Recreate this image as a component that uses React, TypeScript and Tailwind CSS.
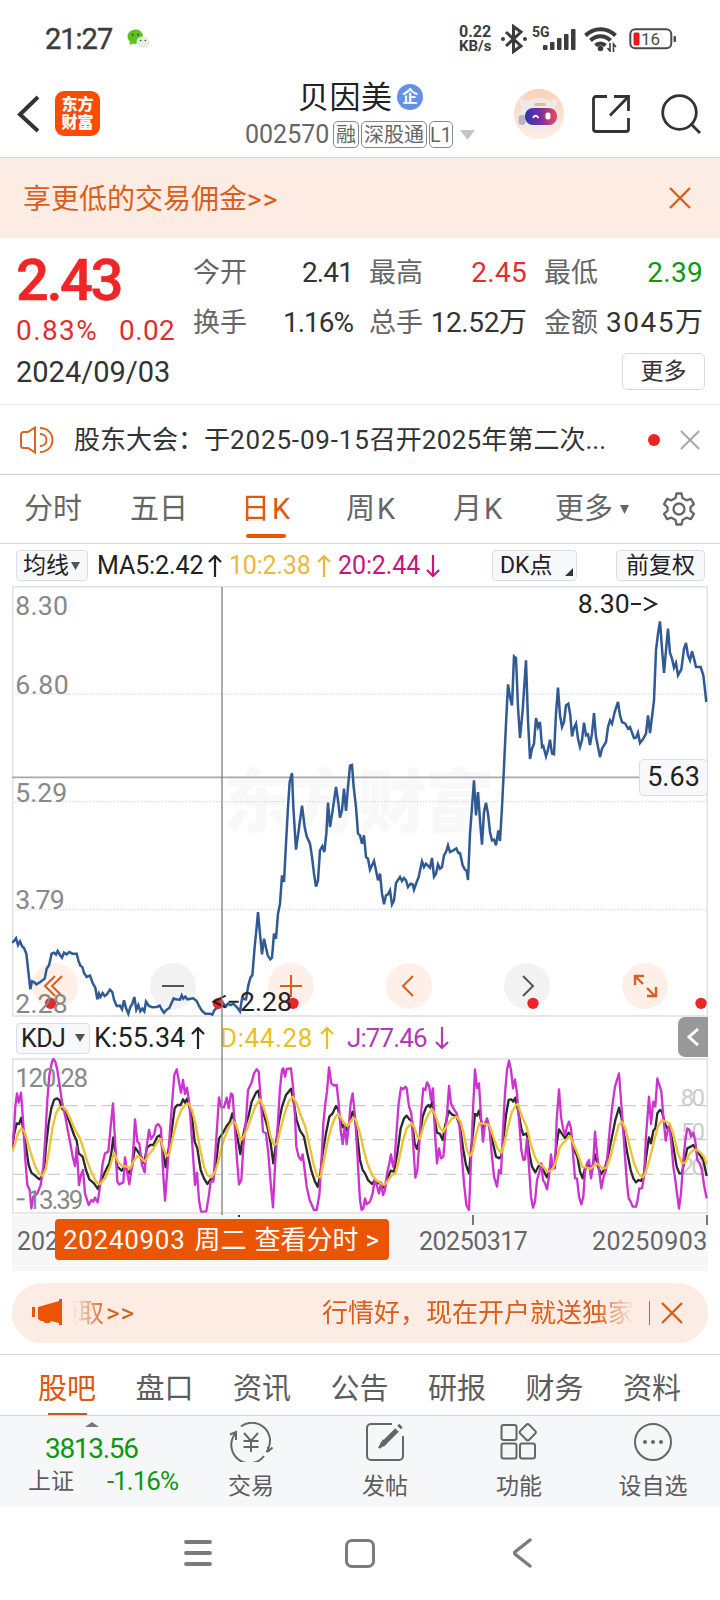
import type { ReactNode } from "react";
import { clsx } from "clsx";

const PRICE_LINE =
  "36,1087 42,1082 48,1074 54,1094 60,1083 66,1098 72,1103 79,1120 84,1165 91,1227 96,1203 103,1206 109,1212 121,1205 134,1195 140,1165 147,1155 155,1120 162,1117 168,1123 173,1112 180,1124 186,1132 192,1117 200,1122 208,1115 217,1120 230,1120 235,1140 241,1156 247,1160 252,1178 260,1190 270,1186 278,1208 286,1222 292,1257 297,1240 301,1250 308,1238 314,1247 320,1243 330,1228 337,1235 342,1258 350,1277 360,1276 366,1287 372,1260 378,1283 385,1300 391,1280 397,1270 403,1250 409,1288 415,1274 421,1293 427,1285 433,1293 438,1264 446,1276 456,1281 470,1280 479,1276 485,1287 492,1297 500,1288 508,1283 516,1265 521,1254 527,1257 540,1258 545,1245 550,1255 556,1249 562,1257 580,1254 590,1262 597,1277 605,1290 616,1300 630,1300 637,1303 643,1290 655,1278 665,1268 672,1272 678,1278 684,1270 692,1274 700,1270 710,1280 720,1293 726,1255 738,1257 745,1215 752,1190 757,1185 764,1100 770,1040 774,995 779,1050 786,1122 792,1075 797,1098 803,1125 811,1137 816,1132 822,1060 828,1075 834,1000 840,970 846,885 852,905 858,790 864,680 869,605 876,578 880,680 888,808 896,750 906,676 914,740 920,768 930,790 936,830 942,880 948,919 954,900 960,810 967,798 973,815 979,760 984,667 990,740 998,690 1008,620 1014,660 1020,712 1026,690 1032,625 1038,692 1044,620 1050,556 1056,554 1061,620 1068,680 1074,760 1080,765 " +
  "1086,790 1092,765 1098,830 1104,835 1110,868 1122,842 1128,870 1134,900 1140,880 1146,940 1152,972 1158,945 1164,942 1170,930 1176,972 1182,960 1188,908 1200,890 1206,902 1212,893 1218,900 1224,920 1232,910 1238,912 1242,928 1250,905 1256,890 1266,843 1272,860 1278,850 1286,858 1290,862 1296,833 1302,889 1308,880 1314,852 1320,865 1326,860 1332,825 1338,815 1344,795 1350,815 1360,810 1369,804 1375,818 1380,818 1388,855 1395,868 1400,872 1404,899 1410,760 1416,680 1422,600 1428,705 1434,635 1440,720 1446,793 1452,695 1458,667 1464,700 1470,755 1476,780 1482,778 1488,795 1495,750 1500,782 1506,680 1512,560 1518,430 1524,312 1530,350 1536,375 1542,228 1548,233 1554,380 1560,473 1568,390 1578,240 1584,420 1590,536 1596,505 1602,490 1608,413 1614,440 1620,425 1626,500 1630,497 1638,528 1644,508 1650,478 1656,520 1662,522 1668,400 1674,322 1680,405 1686,440 1692,425 1698,375 1705,370 1711,405 1716,468 1722,443 1728,430 1734,475 1740,500 1746,480 1752,427 1758,465 1764,462 1770,494 1776,460 1782,398 1788,470 1794,500 1800,530 1806,505 1818,485 1824,440 1830,420 1836,430 1844,395 1854,365 1860,405 1866,425 1876,430 1884,445 1890,440 1902,473 1908,472 1914,457 1920,488 1930,475 1938,460 1944,405 1950,458 1956,410 1962,360 1968,210 1974,160 1980,123 1986,205 1992,278 1998,210 2004,145 2010,218 2016,235 2022,262 2028,248 2034,285 2044,267 2052,205 2058,188 2064,225 2070,240 2076,213 2082,235 2088,260 2102,260 2110,285 2114,320 2119,365";

const J_LINE =
  "36,380 42,330 46,260 51,220 56,248 63,218 69,300 76,420 82,495 89,510 94,565 100,530 112,520 122,495 130,440 136,350 142,240 148,165 156,125 160,117 166,125 172,150 178,190 186,245 196,290 203,330 211,370 218,410 225,438 230,380 237,495 243,465 249,450 255,520 266,555 274,540 280,545 285,533 293,547 300,500 308,430 315,400 325,395 332,320 339,250 345,360 352,485 357,493 370,487 375,412 382,460 388,493 396,440 401,370 405,298 412,365 418,370 426,435 434,457 440,380 447,330 453,357 462,345 468,318 475,312 483,325 489,450 495,542 502,450 510,330 517,240 523,165 530,148 536,180 543,218 549,180 555,222 561,203 568,250 574,330 580,420 585,495 591,458 597,540 603,575 619,574 626,530 632,485 640,485 648,370 657,232 664,262 672,262 680,233 686,265 693,220 698,225 705,330 711,420 717,493 724,480 730,380 738,300 744,210 754,190 762,160 770,148 776,155 783,250 789,335 798,340 805,400 813,500 819,562 825,440 833,320 840,205 846,150 850,145 855,170 860,147 873,145 879,200 885,290 889,380 896,410 903,420 908,403 914,450 920,500 929,540 942,570 950,570 958,525 964,430 970,310 976,250 981,215 987,142 994,190 1002,197 1010,195 1016,250 1022,330 1028,372 1034,320 1040,372 1046,320 1052,250 1058,220 1066,300 1072,400 1078,510 " +
  "1080,540 1085,570 1090,565 1095,535 1100,553 1110,545 1118,520 1124,480 1130,495 1137,520 1143,490 1149,525 1155,510 1161,460 1167,435 1173,403 1179,440 1183,430 1190,330 1196,250 1203,203 1210,208 1216,200 1220,205 1227,260 1234,280 1240,380 1246,473 1252,450 1258,370 1264,270 1270,205 1276,210 1281,187 1288,200 1293,240 1299,205 1305,340 1311,430 1317,385 1323,415 1330,410 1336,340 1342,270 1347,198 1353,250 1360,265 1370,280 1378,315 1385,400 1392,490 1399,555 1407,570 1413,420 1419,270 1425,148 1431,205 1437,190 1443,290 1449,365 1455,310 1461,295 1468,320 1475,400 1482,470 1491,500 1497,450 1503,460 1508,350 1515,220 1521,150 1527,122 1533,150 1539,205 1545,178 1551,220 1557,300 1564,390 1570,420 1575,418 1581,355 1587,440 1593,530 1599,563 1605,545 1611,480 1620,450 1624,430 1629,480 1635,490 1641,508 1647,470 1653,403 1659,445 1665,445 1670,300 1677,208 1683,290 1689,325 1695,345 1701,320 1707,305 1713,325 1719,400 1725,475 1731,475 1737,530 1744,553 1750,530 1755,455 1761,430 1767,420 1773,475 1779,440 1785,335 1791,400 1797,450 1804,505 1811,470 1818,450 1824,390 1830,320 1838,250 1845,200 1857,160 1863,240 1869,320 1875,410 1881,490 1886,535 1892,545 1898,560 1908,560 1912,545 1918,505 1926,505 1932,470 1938,350 1947,230 1953,312 1960,245 1966,260 1972,175 1978,195 1984,215 1990,290 1997,362 2002,335 2008,318 2014,370 2020,440 2026,480 2031,520 2037,566 2043,520 2050,420 2056,360 2062,325 2068,330 2073,350 2080,338 2086,365 2092,420 2099,430 2106,450 2112,495 2120,535";

const K_LINE =
  "36,388 42,345 50,310 57,312 64,293 70,330 78,380 86,435 94,458 105,467 118,478 126,470 133,440 138,380 146,310 154,265 162,240 170,235 178,240 186,265 196,275 210,310 222,345 230,362 236,400 248,410 258,450 268,478 282,490 294,507 302,485 315,455 328,430 334,400 340,352 346,400 352,440 365,452 374,440 388,460 396,440 405,382 414,395 424,410 433,430 440,385 450,375 460,375 472,350 481,345 488,390 497,442 503,400 510,370 518,310 524,265 532,255 542,255 549,238 555,248 561,236 568,260 576,290 584,365 592,385 602,450 612,475 622,492 632,478 640,475 648,430 657,355 668,340 680,318 690,305 697,280 704,308 712,350 721,402 727,360 735,320 745,290 755,245 768,218 775,212 782,250 792,285 802,320 812,370 820,430 828,370 836,310 846,260 858,225 873,206 880,240 890,300 900,332 912,350 922,400 935,455 945,485 953,500 960,470 968,400 978,340 988,290 998,280 1008,258 1015,270 1022,305 1028,322 1034,312 1041,332 1050,300 1058,275 1066,300 1072,350 1080,420 " +
  "1088,450 1095,460 1104,480 1116,492 1125,480 1134,490 1142,487 1152,503 1160,480 1172,452 1182,455 1192,400 1202,325 1212,295 1220,287 1228,298 1236,303 1244,370 1251,387 1260,350 1268,290 1278,262 1286,255 1291,262 1297,245 1303,290 1311,338 1320,342 1328,360 1336,315 1346,272 1355,283 1370,290 1380,320 1390,390 1398,435 1407,460 1413,390 1420,330 1425,282 1431,287 1437,272 1443,300 1449,325 1458,305 1468,320 1478,365 1488,410 1498,415 1504,408 1510,360 1518,285 1526,240 1534,238 1540,245 1546,233 1554,270 1564,325 1570,345 1580,340 1588,400 1596,440 1606,457 1616,438 1625,437 1632,455 1641,472 1648,450 1655,435 1663,442 1670,370 1677,328 1685,340 1695,354 1706,338 1714,350 1723,390 1732,410 1740,455 1748,475 1755,445 1767,435 1775,450 1785,403 1794,440 1804,463 1816,440 1826,400 1836,350 1846,300 1857,263 1864,290 1872,340 1882,400 1892,450 1900,475 1908,487 1916,480 1924,483 1932,460 1940,400 1947,352 1953,370 1960,332 1966,325 1972,280 1980,270 1986,275 1994,310 2002,325 2010,325 2020,380 2030,440 2038,460 2046,460 2052,430 2062,385 2072,380 2080,375 2088,390 2100,405 2110,420 2120,468";

const D_LINE =
  "36,395 44,375 54,340 64,325 74,335 84,370 94,405 106,440 118,462 128,467 138,445 148,385 158,320 168,280 178,262 188,260 200,272 216,308 228,335 240,355 250,385 262,425 276,460 290,488 300,492 315,475 330,440 342,398 354,425 366,438 380,440 390,445 400,425 412,408 424,415 434,425 446,405 458,390 470,370 482,357 490,385 500,408 508,402 520,345 532,300 544,270 556,255 566,250 576,270 586,310 600,385 612,440 622,465 634,472 646,455 656,420 668,370 680,335 692,312 700,305 708,312 716,340 722,362 732,348 744,320 756,285 768,255 780,238 790,260 802,300 812,350 822,375 832,370 842,325 854,280 866,245 878,230 890,250 902,285 916,320 928,375 940,430 952,470 962,472 970,430 982,370 994,320 1006,292 1014,282 1024,295 1034,312 1042,318 1052,305 1060,293 1068,300 1080,340 " +
  "1090,385 1102,430 1116,465 1128,480 1140,488 1152,495 1164,482 1176,465 1186,460 1196,425 1208,365 1220,325 1234,310 1242,320 1252,350 1260,357 1270,320 1284,285 1296,268 1304,280 1318,320 1330,335 1342,315 1356,295 1370,290 1382,305 1392,345 1402,395 1410,408 1418,395 1428,345 1438,310 1446,310 1456,312 1468,315 1480,350 1492,385 1504,398 1512,375 1524,320 1536,275 1548,255 1554,252 1566,290 1580,320 1592,370 1604,410 1616,430 1630,440 1642,455 1656,450 1668,425 1680,380 1696,362 1710,348 1722,375 1736,410 1748,442 1760,442 1770,447 1780,440 1788,430 1798,435 1808,447 1820,442 1832,410 1844,360 1856,315 1866,305 1876,325 1888,375 1902,430 1916,462 1928,472 1936,460 1948,420 1962,365 1974,318 1986,300 1998,305 2010,312 2022,350 2034,400 2046,430 2056,428 2066,405 2080,390 2092,390 2102,398 2112,410 2120,435";

const PERIODS = [
  { label: "分时", left: "ml-[24px]", width: "w-[58px]" },
  { label: "五日", left: "ml-[48px]", width: "w-[58px]" },
  { label: "日K", left: "ml-[53px]", width: "w-[52px]", active: true },
  { label: "周K", left: "ml-[53px]", width: "w-[52px]" },
  { label: "月K", left: "ml-[55px]", width: "w-[54px]" },
];

const SECTIONS = ["股吧", "盘口", "资讯", "公告", "研报", "财务", "资料"];

function StatusBar() {
  return (
    <div className="flex h-[78px] items-center pl-[45px] text-[#3c3c3c]">
      <span className="w-[82px] whitespace-nowrap text-[29px] leading-none tracking-[-1px] [-webkit-text-stroke:0.4px_#3c3c3c]">21:27</span>
      <svg className="h-[20px] w-[23px]" viewBox="0 0 23 20">
        <path d="M3 12.5 2.5 16l3.500-1.500a10 10 0 0 0 4 .3L16 8C16 3 12.500.5 8.500.5S.5 3.500.5 7.500c0 2 1 3.800 2.500 5Z" fill="#5cc21d" />
        <path d="M16 7.500c3.700 0 6.500 2.300 6.500 5.500 0 1.700-.8 3.200-2.200 4.200l.4 2.300-2.500-1.200c-5 1.300-8.700-1.600-8.700-5.300 0-3.200 2.800-5.500 6.500-5.500Z" fill="#e3efe0" />
        <g fill="#33502a">
          <circle cx="5.800" cy="5.800" r="1" />
          <circle cx="11" cy="5.800" r="1" />
          <circle cx="13.700" cy="11.500" r=".8" />
          <circle cx="18.300" cy="11.500" r=".8" />
        </g>
      </svg>
      <div className="ml-[309px] flex w-[38px] flex-col whitespace-nowrap font-bold leading-[14px]">
        <span className="text-[16px]">0.22</span>
        <span className="text-[15px]">KB/s</span>
      </div>
      <svg className="ml-[4px] h-[30px] w-[26px]" viewBox="0 0 26 30" fill="none" stroke="currentColor" strokeWidth="3">
        <path d="m5 8 15 14-7.500 5.500v-25L20 8 5 22" />
        <circle cx="2" cy="15" r="2" fill="currentColor" stroke="none" />
        <circle cx="24" cy="15" r="2" fill="currentColor" stroke="none" />
      </svg>
      <div className="relative ml-[5px] h-[28px] w-[44px]">
        <span className="absolute left-0 top-0 text-[14px] font-bold leading-[14px]">5G</span>
        <svg className="h-full w-full" viewBox="0 0 44 28" fill="currentColor">
          <rect x="11" y="20" width="4.500" height="5" rx="1" />
          <rect x="18" y="17" width="4.500" height="8" rx="1" />
          <rect x="25" y="13" width="4.500" height="12" rx="1" />
          <rect x="32" y="9" width="4.500" height="16" rx="1" />
          <rect x="39" y="4" width="4.500" height="21" rx="1" />
        </svg>
      </div>
      <svg className="ml-[8px] h-[26px] w-[34px]" viewBox="0 0 34 26" fill="none" stroke="currentColor" strokeWidth="4">
        <path d="M1.500 9.500a21 21 0 0 1 30 0M6.500 14.500a14 14 0 0 1 20 0M11.500 19.500a7 7 0 0 1 10 0" />
        <circle cx="16.500" cy="22.500" r="2.800" fill="currentColor" stroke="none" />
        <path d="M26 17v8l-2.500-3M29.500 26v-8l2.500 3" strokeWidth="1.600" />
      </svg>
      <svg className="ml-[11px] h-[22px] w-[48px]" viewBox="0 0 48 22">
        <rect x="1.300" y="1.300" width="41" height="19" rx="5" fill="none" stroke="#4a4a4a" strokeWidth="2" />
        <rect x="4.500" y="4.500" width="6" height="13" rx="1.500" fill="#e8191c" />
        <rect x="44.500" y="8" width="2.500" height="6" rx="1" fill="#4a4a4a" />
        <text x="12" y="17" fontSize="17" fill="#4a4a4a">16</text>
      </svg>
    </div>
  );
}

function Tag({ children, className }: { children: ReactNode; className: string }) {
  return (
    <span className={clsx("flex h-[27px] items-center justify-center whitespace-nowrap rounded-[5px] border border-[#888] text-[20px] leading-none", className)}>
      {children}
    </span>
  );
}

function Header() {
  return (
    <div className="flex h-[80px] items-center border-b border-[#d2d4d6] pb-[8px] pl-[17px]">
      <svg className="h-[38px] w-[24px]" viewBox="0 0 24 38" fill="none" stroke="#333" strokeWidth="4">
        <path d="M21 2 3 19.500 21 36" />
      </svg>
      <div className="ml-[14px] flex h-[45px] w-[45px] flex-col items-center justify-center rounded-[9px] bg-[#fd4a04] text-[16px] font-black leading-[18px] text-white">
        <span>东方</span>
        <span>财富</span>
      </div>
      <div className="ml-[145px] mt-[2px] flex w-[230px] flex-col">
        <div className="ml-[53px] flex h-[34px] items-center">
          <span className="w-[99px] whitespace-nowrap text-[31px] leading-none tracking-[0.500px] text-[#222]">贝因美</span>
          <span className="mb-[1px] flex h-[26px] w-[26px] items-center justify-center rounded-full bg-[#6490e6] text-[16px] font-bold leading-none text-white">企</span>
        </div>
        <div className="mt-[6px] flex h-[28px] items-center text-[#666]">
          <span className="w-[88px] whitespace-nowrap text-[25px] leading-none">002570</span>
          <Tag className="w-[26px]">融</Tag>
          <Tag className="ml-[2px] w-[66px]">深股通</Tag>
          <Tag className="ml-[2px] w-[24px]">L1</Tag>
          <svg className="ml-[7px] h-[10px] w-[15px]" viewBox="0 0 15 10"><path d="M0 0h15L7.500 10Z" fill="#c4c4c4" /></svg>
        </div>
      </div>
      <svg className="ml-[39px] h-[50px] w-[50px]" viewBox="0 0 50 50">
        <defs>
          <linearGradient id="face" x1="0" x2="1">
            <stop offset="0" stopColor="#3434b4" />
            <stop offset=".5" stopColor="#7a2fa0" />
            <stop offset="1" stopColor="#ec4a5c" />
          </linearGradient>
          <linearGradient id="halo" x1="0" x2="0" y1="0" y2="1">
            <stop offset="0" stopColor="#fdd0b8" />
            <stop offset="1" stopColor="#fdeee5" />
          </linearGradient>
        </defs>
        <circle cx="25" cy="25" r="25" fill="url(#halo)" />
        <path d="M5 11c1-3 3-2 4 0l5 1c6-4 16-4 22 0l4-1c2-2 3-1 3 2 0 4-3 5-3 5 3 4 6 7 6 12 0 7-9 11-21 11S5 37 5 30c0-5 1-8 4-12-3-1-4-4-4-7Z" fill="#eeeaec" />
        <rect x="4.500" y="26" width="7" height="10" rx="3" fill="#b9b6c2" />
        <rect x="20" y="14" width="12" height="3" rx="1.500" fill="#e6b987" />
        <rect x="11" y="19" width="32" height="17" rx="8" fill="url(#face)" />
        <path d="M19 29c1-3 4-3 5.500 0" fill="none" stroke="#fff" strokeWidth="1.800" />
        <rect x="31.500" y="23.500" width="5" height="7" rx="2" fill="#fff" />
      </svg>
      <svg className="ml-[27px] h-[40px] w-[40px]" viewBox="0 0 40 40" fill="none" stroke="#333" strokeWidth="2.800">
        <path d="M16 2.500H5A2.500 2.500 0 0 0 2.500 5v30A2.500 2.500 0 0 0 5 37.500h30a2.500 2.500 0 0 0 2.500-2.500V24M23 2.500h14.500V17M37 3 19 21.500" />
      </svg>
      <svg className="ml-[30px] h-[40px] w-[40px]" viewBox="0 0 40 40" fill="none" stroke="#333" strokeWidth="2.800">
        <circle cx="18.500" cy="18.500" r="16.800" />
        <path d="m30 30 9 9" />
      </svg>
    </div>
  );
}

function Cross({ className }: { className: string }) {
  return (
    <svg className={className} viewBox="0 0 22 22" fill="none" stroke="currentColor" strokeWidth="2.400">
      <path d="m1 1 20 20M21 1 1 21" />
    </svg>
  );
}

function Stat({ label, value, unit, tone = "text-[#333]", spacing }: { label: string; value: string; unit?: string; tone?: string; spacing?: string }) {
  return (
    <div className="flex h-[50px] items-center justify-between whitespace-nowrap leading-none">
      <span className="text-[27px] text-[#666]">{label}</span>
      <span className={clsx("text-[28px]", tone)}>
        <span className={spacing}>{value}</span>
        {unit}
      </span>
    </div>
  );
}

function Quote() {
  return (
    <div className="flex h-[167px] flex-col border-b border-[#ececec] px-[16px]">
      <div className="flex h-[108px]">
        <div className="w-[177px] pt-[11px]">
          <div className="h-[60px] text-[58px] font-medium leading-[62px] tracking-[-2.500px] text-[#f02626] [-webkit-text-stroke:0.6px_#f02626]">2.43</div>
          <div className="mt-[8px] flex whitespace-nowrap text-[28px] leading-[28px] text-[#de3030]">
            <span className="w-[103px] tracking-[1.400px]">0.83%</span>
            <span className="tracking-[0.400px]">0.02</span>
          </div>
        </div>
        <div className="w-[160px] pt-[10px]">
          <Stat label="今开" value="2.41" spacing="tracking-[-0.900px]" />
          <Stat label="换手" value="1.16%" spacing="tracking-[-1px]" />
        </div>
        <div className="ml-[16px] w-[158px] pt-[10px]">
          <Stat label="最高" value="2.45" tone="text-[#de3030]" spacing="tracking-[0.300px]" />
          <Stat label="总手" value="12.52" unit="万" spacing="tracking-[-0.400px]" />
        </div>
        <div className="ml-[17px] w-[159px] pt-[10px]">
          <Stat label="最低" value="2.39" tone="text-[#0a9a0a]" spacing="tracking-[0.300px]" />
          <Stat label="金额" value="3045" unit="万" spacing="tracking-[1.500px]" />
        </div>
      </div>
      <div className="flex h-[50px] items-center justify-between">
        <span className="mt-[2px] text-[29px] leading-none text-[#333]">2024/09/03</span>
        <span className="mr-[-1px] flex h-[37px] w-[83px] items-center justify-center rounded-[5px] border border-[#d9dbde] text-[23px] leading-none text-[#333]">更多</span>
      </div>
    </div>
  );
}

function Notice() {
  return (
    <div className="flex h-[70px] items-center border-b border-[#ccc] pl-[20px] text-[#333]">
      <svg className="h-[28px] w-[34px]" viewBox="0 0 34 28" fill="none" stroke="#d9661f" strokeWidth="2">
        <path d="M15 1.500v25L8 22H3.500A2.500 2.500 0 0 1 1 19.500v-11A2.500 2.500 0 0 1 3.500 6H8ZM20 2c7 0 12.500 5 12.500 12S27 26 20 26M20 8c4 0 6.500 2.500 6.500 6S24 20 20 20" />
      </svg>
      <span className="ml-[20px] w-[574px] whitespace-nowrap text-[26px] leading-none">
        股东大会：于<span className="tracking-[0.850px]">2025-09-15</span>召开<span className="tracking-[0.300px]">2025</span>年第二次...
      </span>
      <span className="h-[12px] w-[12px] rounded-full bg-[#f02323]" />
      <Cross className="ml-[20px] h-[20px] w-[20px] text-[#aaa]" />
    </div>
  );
}

function PeriodTabs() {
  return (
    <div className="flex h-[69px] items-center border-b border-[#d6d6d6] text-[29px] leading-none text-[#666]">
      {PERIODS.map((p) => (
        <div key={p.label} className={clsx("relative flex h-full items-center whitespace-nowrap", p.left, p.width, p.active && "text-[#e2560c]")}>
          {p.label.endsWith("K") ? (
            <>
              <span>{p.label[0]}</span>
              <span className="ml-[2px]">K</span>
            </>
          ) : (
            p.label
          )}
          {p.active && <span className="absolute bottom-[5px] left-[5px] h-[4px] w-[40px] rounded-full bg-[#ea5504]" />}
        </div>
      ))}
      <span className="ml-[48px] w-[65px] whitespace-nowrap">更多</span>
      <svg className="h-[9px] w-[9px]" viewBox="0 0 9 9"><path d="M0 0h9L4.500 9Z" fill="#666" /></svg>
      <svg className="ml-[33px] h-[34px] w-[34px]" viewBox="0 0 34 34" fill="none" stroke="#666" strokeWidth="2.300" strokeLinejoin="round">
        <path d="M14.500 1.500h5l1 4.500 4 2.300 4.400-1.400 3 5.200-3.400 3v3.800l3.400 3-3 5.200-4.400-1.400-4 2.300-1 4.500h-5l-1-4.500-4-2.300-4.400 1.400-3-5.200 3.400-3v-3.800l-3.400-3 3-5.200 4.400 1.400 4-2.300Z" />
        <circle cx="17" cy="17" r="5.500" />
      </svg>
    </div>
  );
}

function Chip({ children, className }: { children: ReactNode; className: string }) {
  return (
    <span className={clsx("relative flex h-[31px] items-center whitespace-nowrap rounded-[4px] border border-[#dadde2] bg-[#f7f8fb] text-[#222]", className)}>
      {children}
    </span>
  );
}

function Arrow({ down = false, className }: { down?: boolean; className?: string }) {
  return (
    <svg className={clsx("h-[22px] w-[14px]", className)} viewBox="0 0 14 22" fill="none" stroke="currentColor" strokeWidth="2.200">
      <path d={down ? "M7 0v21M1 15l6 6 6-6" : "M7 22V1M1 7l6-6 6 6"} />
    </svg>
  );
}

function AverageRow() {
  return (
    <div className="flex h-[42px] items-center pl-[16px] pt-[1px] text-[25px] leading-none">
      <Chip className="w-[72px] pl-[6px] text-[23px]">
        均线
        <svg className="ml-[2px] h-[8px] w-[9px]" viewBox="0 0 9 8"><path d="M0 0h9L4.500 8Z" fill="#555" /></svg>
      </Chip>
      <span className="ml-[9px] w-[111px] whitespace-nowrap tracking-[-0.100px] text-[#222]">MA5:2.42</span>
      <Arrow className="text-[#222]" />
      <span className="ml-[7px] w-[88px] whitespace-nowrap tracking-[-0.200px] text-[#efb63c]">10:2.38</span>
      <Arrow className="text-[#efb63c]" />
      <span className="ml-[7px] w-[88px] whitespace-nowrap tracking-[-0.100px] text-[#c8147f]">20:2.44</span>
      <Arrow down className="text-[#c8147f]" />
      <Chip className="ml-[52px] w-[85px] pl-[7px] text-[23px]">
        DK点
        <svg className="absolute bottom-[4px] right-[3px] h-[8px] w-[8px]" viewBox="0 0 8 8"><path d="M8 0v8H0Z" fill="#333" /></svg>
      </Chip>
      <Chip className="ml-[39px] w-[89px] justify-center text-[23px]">前复权</Chip>
    </div>
  );
}

function RoundButton({ tint, children }: { tint: "orange" | "gray"; children: ReactNode }) {
  return (
    <div className={clsx("flex h-[46px] w-[46px] items-center justify-center rounded-full", tint === "orange" ? "bg-[#fef0e8] text-[#d9601c]" : "bg-[#f2f2f2] text-[#555]")}>
      <svg className="h-[46px] w-[46px]" viewBox="0 0 46 46" fill="none" stroke="currentColor" strokeWidth="2">
        {children}
      </svg>
    </div>
  );
}

// Both charts are drawn in a coordinate space of 3 units per pixel.
function PriceChart() {
  return (
    <div className="relative ml-[12px] h-[431px] w-[696px]">
      <svg className="block h-[431px] w-[696px]" viewBox="36 17 2088 1293">
        <text x="668" y="740" fontSize="208" fontWeight="900" fill="#f8f8f8" textLength="815">东方财富</text>
        <g stroke="#cfcfcf" strokeWidth="3" strokeDasharray="4 5">
          <path d="M36 341H2124M36 664H2124M36 988H2124" />
        </g>
        <rect x="38" y="19" width="2084" height="1288" fill="none" stroke="#e2e2e2" strokeWidth="5" />
        <path d="M36 591H2124" stroke="#a8a8a8" strokeWidth="5" />
      </svg>
      <div className="absolute left-[20px] top-[377px] flex gap-[72px]">
        <RoundButton tint="orange"><path d="M23 13 13 23l10 10M30 13 20 23l10 10" /></RoundButton>
        <RoundButton tint="gray"><path d="M12 23h22" /></RoundButton>
        <RoundButton tint="orange"><path d="M12 23h22M23 12v22" /></RoundButton>
        <RoundButton tint="orange"><path d="M27 13 17 23l10 10" /></RoundButton>
        <RoundButton tint="gray"><path d="m19 13 10 10-10 10" /></RoundButton>
        <RoundButton tint="orange"><path d="M13 22v-9h9M13 13l8 8M34 24v9h-9M33 33l-8-8" strokeWidth="2.400" /></RoundButton>
      </div>
      <svg className="absolute left-0 top-0 h-[431px] w-[696px]" viewBox="36 17 2088 1293">
        <polyline points={PRICE_LINE} fill="none" stroke="#305a94" strokeWidth="7.500" />
        <g fill="#ea2626">
          <circle cx="152" cy="1269" r="17" />
          <circle cx="655" cy="1269" r="17" />
          <circle cx="879" cy="1269" r="17" />
          <circle cx="1599" cy="1269" r="17" />
          <circle cx="2103" cy="1269" r="17" />
        </g>
        <g fontSize="80" fill="#888">
          <text x="46" y="104" textLength="158">8.30</text>
          <text x="46" y="341" textLength="160">6.80</text>
          <text x="46" y="665" textLength="156">5.29</text>
          <text x="46" y="987" textLength="148">3.79</text>
          <text x="46" y="1298" textLength="157">2.28</text>
        </g>
        <g fontSize="80" fill="#222">
          <text x="1733" y="98" textLength="156">8.30</text>
          <text x="720" y="1293" textLength="156">2.28</text>
        </g>
        <g fill="none" stroke="#222" strokeWidth="6">
          <path d="M1893 71h30M1932 52l36 19-36 19M716 1264h-30M677 1246l-36 18 36 18" />
        </g>
      </svg>
      <div className="absolute right-0 top-[173px] flex h-[37px] w-[69px] items-center justify-center rounded-[5px] border border-[#d9dce2] bg-[#f7f8fb] text-[27px] leading-none text-[#222]">5.63</div>
    </div>
  );
}

function KdjRow() {
  return (
    <div className="flex h-[41px] items-center pl-[16px] pt-[1px] text-[26px] leading-none">
      <Chip className="w-[74px] pl-[4px] text-[25px] tracking-[-0.500px]">
        KDJ
        <svg className="ml-[10px] h-[8px] w-[10px]" viewBox="0 0 10 8"><path d="M0 0h10L5 8Z" fill="#555" /></svg>
      </Chip>
      <span className="ml-[4px] w-[97px] whitespace-nowrap text-[27px] text-[#222]">K:55.34</span>
      <Arrow className="text-[#222]" />
      <span className="ml-[15px] w-[100px] whitespace-nowrap tracking-[0.600px] text-[#e8c020]">D:44.28</span>
      <Arrow className="text-[#e8c020]" />
      <span className="ml-[13px] w-[88px] whitespace-nowrap tracking-[-0.900px] text-[#b23ab8]">J:77.46</span>
      <Arrow down className="text-[#b23ab8]" />
      <span className="mt-[-3px] ml-[229px] flex h-[40px] w-[30px] shrink-0 items-center justify-center rounded-l-[7px] bg-[#999]">
        <svg className="h-[18px] w-[12px]" viewBox="0 0 12 18" fill="none" stroke="#fff" strokeWidth="3"><path d="m11 1-9 8 9 8" /></svg>
      </span>
    </div>
  );
}

function KdjChart() {
  return (
    <svg className="ml-[12px] block h-[157px] w-[696px]" viewBox="36 114 2088 471">
      <g fontSize="72" fill="#ccc">
        <text x="2042" y="258" textLength="73">80</text>
        <text x="2042" y="361" textLength="73">50</text>
        <text x="2042" y="465" textLength="73">20</text>
      </g>
      <path d="M36 257H2124M36 359H2124M36 463H2124" stroke="#ccc" strokeWidth="4" strokeDasharray="36 18" />
      <rect x="38" y="117" width="2084" height="462" fill="none" stroke="#e2e2e2" strokeWidth="5" />
      <g fill="none" strokeWidth="7" strokeLinejoin="round">
        <polyline points={K_LINE} stroke="#2a2a2a" />
        <polyline points={J_LINE} stroke="#cc33cf" />
        <polyline points={D_LINE} stroke="#ecc132" />
      </g>
      <g fontSize="78" fill="#888">
        <text x="46" y="201" textLength="218">120.28</text>
        <path d="M50 538h24" stroke="#888" strokeWidth="6" />
        <text x="80" y="567" textLength="170">13.39</text>
      </g>
    </svg>
  );
}

function DateAxis() {
  return (
    <div className="relative mx-[12px] flex h-[56px] items-center bg-[#f7f7fa] pb-[3px] text-[25px] leading-none text-[#666]">
      <span className="ml-[5px] w-[402px]">202</span>
      <span className="w-[173px] whitespace-nowrap tracking-[-0.500px]">20250317</span>
      <span className="whitespace-nowrap tracking-[0.400px]">20250903</span>
      <span className="absolute left-[226px] top-0 h-[2px] w-[2px] bg-[#333]" />
      <span className="absolute left-[460px] top-0 h-[10px] w-[2px] bg-[#777]" />
      <span className="absolute left-[694px] top-0 h-[10px] w-[2px] bg-[#777]" />
      <div className="absolute left-[43px] top-[4px] flex h-[41px] w-[334px] items-center whitespace-pre rounded-[4px] bg-[#ea5504] pl-[8px] text-[26px] text-white">
        <span className="tracking-[0.700px]">20240903</span>
        <span className="ml-[9px]">周二</span>
        <span className="ml-[8px]">查看分时</span>
        <span className="ml-[7px]">&gt;</span>
      </div>
    </div>
  );
}

function PromoBar() {
  return (
    <div className="mx-[12px] mt-[12px] flex h-[60px] items-center rounded-full bg-[#fcece3] pl-[20px] text-[26px] leading-none text-[#d9601c]">
      <svg className="h-[28px] w-[30px]" viewBox="0 0 30 28" fill="#ea5504">
        <path d="M0 8h3v10H0ZM6 8l21-6V0h3v26h-3v-2l-8-2c-1 3-6 3-8 0H9l-3-2Z" />
      </svg>
      <div className="ml-[10px] flex w-[204px] overflow-hidden whitespace-nowrap [mask-image:linear-gradient(to_right,transparent,#000_34px)]">
        <span className="ml-[-20px]">领取</span>
        <span className="ml-[2px] tracking-[1px]">&gt;&gt;</span>
      </div>
      <div className="ml-[46px] w-[319px] shrink-0 overflow-hidden whitespace-nowrap [mask-image:linear-gradient(to_right,#000_275px,transparent_312px)]">
        行情好，现在开户就送独家!
      </div>
      <span className="ml-[8px] h-[24px] w-px shrink-0 bg-[#d9601c]" />
      <Cross className="ml-[11px] h-[22px] w-[22px] shrink-0" />
    </div>
  );
}

function SectionTabs() {
  return (
    <div className="mt-[11px] flex h-[62px] items-center border-y border-[#d3d5d8] pl-[38px] text-[29px] leading-none text-[#5c5c5c]">
      {SECTIONS.map((label, i) => (
        <div key={label} className={clsx("relative flex h-full w-[97.500px] shrink-0 items-center whitespace-nowrap pt-[9px]", i === 0 && "text-[#e2560c]")}>
          {label}
          {i === 0 && <span className="absolute bottom-0 left-[10px] h-[2px] w-[39px] bg-[#c8571c]" />}
        </div>
      ))}
    </div>
  );
}

function Action({ label, children }: { label: string; children: ReactNode }) {
  return (
    <div className="flex w-[134px] flex-col items-center pt-[6px] text-[23px] leading-none text-[#5c5c5c]">
      <svg className="h-[40px] w-[44px]" viewBox="0 0 44 40" fill="none" stroke="#666" strokeWidth="2">{children}</svg>
      <span className="mt-[13px] whitespace-nowrap">{label}</span>
    </div>
  );
}

function ActionBar() {
  return (
    <div className="flex h-[90px] bg-[#f6f7f9]">
      <div className="relative w-[184px] pl-[28px] leading-none">
        <svg className="absolute left-[85px] top-[6px] h-[5px] w-[14px]" viewBox="0 0 14 5"><path d="M0 5h14L7 0Z" fill="#777" /></svg>
        <div className="ml-[17px] mt-[19px] text-[28px] tracking-[-1.300px] text-[#0f980f]">3813.56</div>
        <div className="mt-[5px] flex items-center whitespace-nowrap">
          <span className="w-[79px] text-[23px] text-[#5c5c5c]">上证</span>
          <span className="text-[26px] tracking-[-1px] text-[#0f980f]">-1.16%</span>
        </div>
      </div>
      <Action label="交易">
        <path d="M12 4.500A18 18 0 0 1 39 27M35 34A18 18 0 0 1 6 12M1 12.500l6-2.500v8M37 29l2 .5 4.500-4M39 29v-4M15 11l7 8 7-8M22 19v11M14.500 19h15M14.500 25h15" />
      </Action>
      <Action label="发帖">
        <path d="M29 2H8a4 4 0 0 0-4 4v28a4 4 0 0 0 4 4h28a4 4 0 0 0 4-4V14" />
        <path d="M34 8 19 23M38 3.500l-2 2" strokeWidth="5" />
        <path d="m20 19-4 7 6-4Z" fill="#666" />
      </Action>
      <Action label="功能">
        <rect x="4.500" y="3" width="15" height="15" rx="2" />
        <rect x="4.500" y="21.500" width="15" height="15" rx="2" />
        <rect x="23" y="21.500" width="15" height="15" rx="2" />
        <rect x="24.500" y="4" width="12.500" height="12.500" rx="2" transform="rotate(45 30.750 10.250)" />
      </Action>
      <Action label="设自选">
        <circle cx="22" cy="20" r="18" />
        <g fill="#666" stroke="none">
          <circle cx="14" cy="20" r="2" />
          <circle cx="22" cy="20" r="2" />
          <circle cx="30" cy="20" r="2" />
        </g>
      </Action>
    </div>
  );
}

function SystemNav() {
  return (
    <div className="flex h-[94px] items-center pl-[184px]">
      <svg className="h-[28px] w-[28px]" viewBox="0 0 28 28" stroke="#7b7b7b" strokeWidth="3.800" strokeLinecap="round"><path d="M2 3h24M2 14h24M2 25h24" /></svg>
      <span className="ml-[133px] h-[29px] w-[30px] rounded-[7px] border-[3.500px] border-[#7b7b7b]" />
      <svg className="ml-[136px] h-[30px] w-[22px]" viewBox="0 0 22 30" fill="none" stroke="#7b7b7b" strokeWidth="3.500" strokeLinecap="round" strokeLinejoin="round"><path d="M19 2 4.500 13.500q-1.500 1.500 0 3L19 28" /></svg>
    </div>
  );
}

export default function App() {
  return (
    <div className="h-[1600px] w-[720px] overflow-hidden bg-white font-['Roboto','Noto_Sans_CJK_SC',sans-serif]">
      <StatusBar />
      <Header />
      <div className="flex h-[80px] items-center justify-between bg-[#fcece3] pl-[23px] pr-[29px] text-[#d9601c]">
        <span className="mt-[3px] whitespace-nowrap text-[28px] leading-none">
          享更低的交易佣金<span className="tracking-[1px]">&gt;&gt;</span>
        </span>
        <Cross className="h-[22px] w-[22px]" />
      </div>
      <Quote />
      <Notice />
      <PeriodTabs />
      <div className="relative">
        <AverageRow />
        <PriceChart />
        <KdjRow />
        <KdjChart />
        <span className="absolute left-[221px] top-[43px] h-[630px] w-[2px] bg-[#888]/70" />
      </div>
      <DateAxis />
      <PromoBar />
      <SectionTabs />
      <ActionBar />
      <SystemNav />
    </div>
  );
}
